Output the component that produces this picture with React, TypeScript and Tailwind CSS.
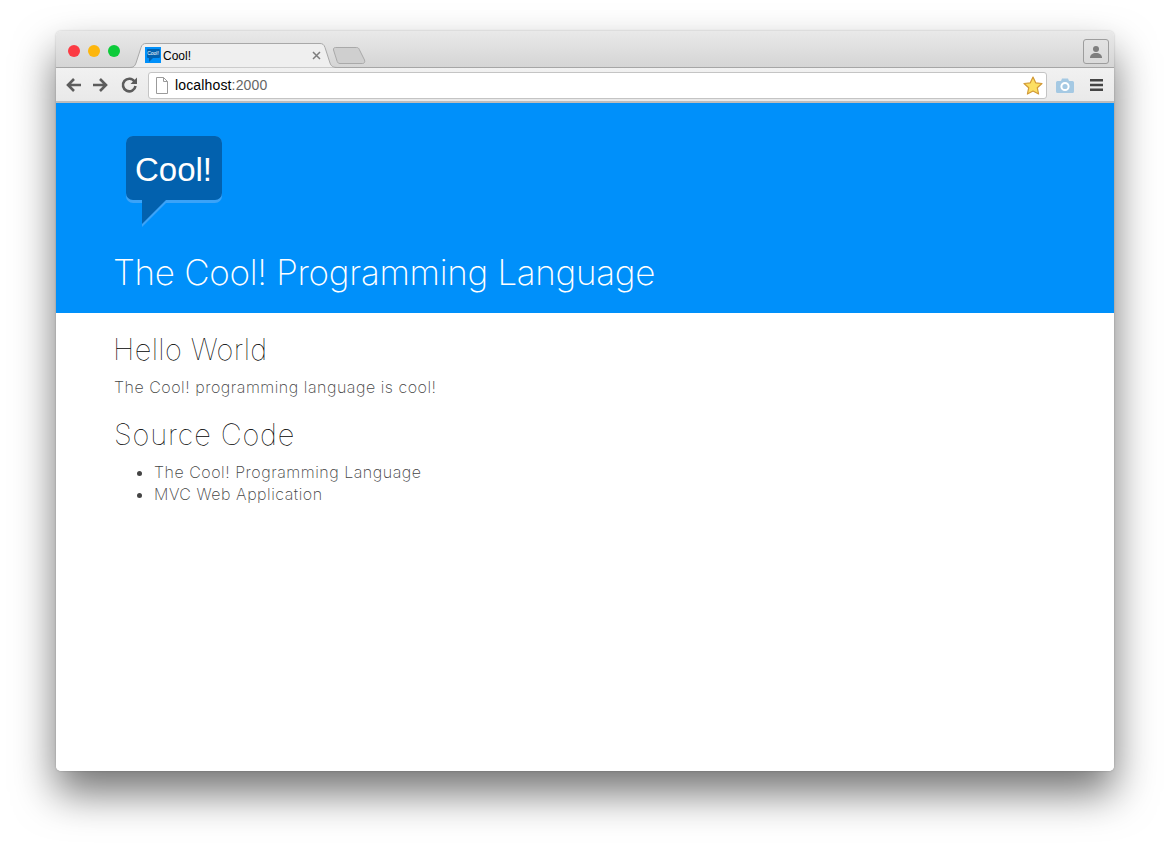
import React from "react";

const Logo = () => (
  <svg width="98" height="92" viewBox="0 0 98 92" className="block">
    <path d="M7 0H89a7 7 0 0 1 7 7V60a7 7 0 0 1-7 7H40L16 91V67H7a7 7 0 0 1-7-7V7a7 7 0 0 1 7-7Z" fill="#3ba3f8" />
    <path d="M7 0H89a7 7 0 0 1 7 7V57a7 7 0 0 1-7 7H40L16 88V64H7a7 7 0 0 1-7-7V7a7 7 0 0 1 7-7Z" fill="#0261ae" />
  </svg>
);

function TabShape() {
  return (
    <svg width="208" height="25" viewBox="0 0 208 25" className="block">
      <path d="M0 24.500c3.500 0 5-1.500 6-4.500L11 4.500C12 1.500 13.500.5 16 .5H190c2.500 0 4 1 5 4l5 15.500c1 3 3 4.500 7.500 4.500" fill="#efefef" stroke="#a8a8a8" strokeWidth="1" />
    </svg>
  );
}

export default function App() {
  return (
    <div className="h-[851px] w-[1170px] overflow-hidden bg-white px-[56px] pt-[31px] font-['Liberation_Sans',sans-serif]">
      <div className="flex h-[740px] w-[1058px] flex-col overflow-hidden rounded-[5px] bg-white shadow-[0_22px_42px_rgba(0,0,0,0.55),0_0_2px_rgba(0,0,0,0.25)]">
        {/* tab strip */}
        <div className="relative flex h-[37px] shrink-0 items-end border-b border-[#a6a6a6] bg-gradient-to-b from-[#e9e9e9] to-[#d5d5d5]">
          <div className="flex h-full items-center gap-2 pl-[12px] pt-1">
            <span className="h-3 w-3 rounded-full bg-[#fc3b44]" />
            <span className="h-3 w-3 rounded-full bg-[#fdb60d]" />
            <span className="h-3 w-3 rounded-full bg-[#0dcb3a]" />
          </div>
          <svg width="34" height="18" viewBox="0 0 34 18" className="absolute left-[276px] top-[16px]">
            <path d="M1.500 3c-.3-1.500.5-2.500 2-2.500h21c1.500 0 2.300.7 2.800 2L32.500 13c.8 2-.2 3.500-2 3.500H8c-1.500 0-2.300-.7-2.800-2Z" fill="#cfcfcf" stroke="#a9a9a9" strokeWidth="1" />
          </svg>
          <div className="absolute left-[74px] top-[12px]">
            <TabShape />
          </div>
          <div className="absolute left-[89px] top-[16px] flex w-[176px] items-center gap-[2px]">
            <div className="flex h-4 w-4 flex-col items-center bg-[#0090fa] pt-[2px]">
              <div className="flex h-[9px] w-[13px] items-center justify-center rounded-[1px] bg-[#0261ae] text-[5px] leading-none text-white">Cool!</div>
              <svg width="13" height="4" viewBox="0 0 13 4" className="block">
                <path d="M2 0h4L2 4Z" fill="#0261ae" />
              </svg>
            </div>
            <span className="pt-[1px] text-[12px] leading-none text-black">Cool!</span>
            <svg width="9" height="9" viewBox="0 0 9 9" className="ml-auto">
              <path d="M1 1l7 7M8 1L1 8" stroke="#7d7d7d" strokeWidth="1.500" />
            </svg>
          </div>
          <div className="absolute right-[5px] top-[8px] flex h-[25px] w-[26px] items-center justify-center rounded-[3px] border border-[#9d9d9d] bg-gradient-to-b from-[#e3e3e3] to-[#dadada]">
            <svg width="14" height="14" viewBox="0 0 14 14">
              <circle cx="7" cy="4" r="3" fill="#7f7f7f" />
              <path d="M1 13c0-3.500 2.500-5 6-5s6 1.500 6 5Z" fill="#7f7f7f" />
            </svg>
          </div>
        </div>
        {/* toolbar */}
        <div className="flex h-[35px] shrink-0 items-center border-b-2 border-[#6f6f6f]/40 bg-gradient-to-b from-[#f1f1f1] to-[#e9e9e9] pl-[9px] pr-[11px] pt-[1px]">
          <svg width="76" height="18" viewBox="0 0 76 18" className="shrink-0">
            <g fill="none" stroke="#5c5c5c" strokeWidth="2.600">
              <path d="M16 9H3M9 3 3 9l6 6" />
              <path d="M28 9h13M35 3l6 6-6 6" />
              <path d="M69.500 5.500A6.300 6.300 0 1 0 70.500 10" />
            </g>
            <path d="M72 1.500V8h-6.500Z" fill="#5c5c5c" />
          </svg>
          <div className="ml-[7px] flex h-[27px] min-w-0 flex-1 items-center rounded-[3px] border border-[#c4c4c4] bg-white pl-[7px] pr-[3px]">
            <svg width="12" height="17" viewBox="0 0 12 17" className="shrink-0">
              <path d="M.5.500h7l4 4v12H.5Z" fill="#fff" stroke="#9b9b9b" />
              <path d="M7.500.500v4h4" fill="none" stroke="#9b9b9b" />
            </svg>
            <span className="ml-[7px] text-[14px] leading-none tracking-[0.15px] text-black">
              localhost<span className="text-[#666]">:2000</span>
            </span>
            <svg width="20" height="19" viewBox="0 0 20 19" className="ml-auto shrink-0">
              <path d="M10 1l2.700 5.800 6.300.7-4.700 4.300 1.300 6.200L10 15l-5.600 3 1.300-6.200L1 7.500l6.300-.7Z" fill="#fcdf63" stroke="#d29a37" strokeWidth="1.200" strokeLinejoin="round" />
            </svg>
          </div>
          <svg width="18" height="15" viewBox="0 0 18 15" className="ml-[9px] shrink-0">
            <path d="M1.500 3H5l1-2.500h6L13 3h3.500A1.500 1.500 0 0 1 18 4.500v9a1.500 1.500 0 0 1-1.500 1.500h-15A1.500 1.500 0 0 1 0 13.500v-9A1.500 1.500 0 0 1 1.500 3Z" fill="#a5c9e3" />
            <circle cx="9" cy="8.500" r="3.600" fill="none" stroke="#fff" strokeWidth="2" />
          </svg>
          <svg width="13" height="12" viewBox="0 0 13 12" className="ml-[16px] shrink-0">
            <path d="M0 0h13v2.500H0ZM0 4.700h13v2.500H0ZM0 9.400h13v2.600H0Z" fill="#454545" />
          </svg>
        </div>
        {/* header */}
        <header className="flex h-[210px] shrink-0 flex-col bg-[#0090fa] pl-[58px] text-white">
          <div className="relative ml-[12px] mt-[33px] h-[92px] w-[98px]">
            <Logo />
            <span className="absolute left-[9px] top-[14px] text-[33px] leading-[40px] text-white">Cool!</span>
          </div>
          <h1 className="-ml-[1px] mt-[22px] font-['Inter',sans-serif] text-[35px] font-extralight leading-[45px] tracking-[-0.3px] text-white">
            The Cool! Programming Language
          </h1>
        </header>
        {/* content */}
        <main className="flex-1 bg-white pl-[58px] pt-[21px] font-['Inter',sans-serif] text-[#444]">
          <h2 className="-ml-[1px] text-[29px] font-thin leading-[32px] tracking-[0.4px] text-black">Hello World</h2>
          <p className="mt-[10px] text-[16px] font-extralight leading-[22px] tracking-[0.52px]">The Cool! programming language is cool!</p>
          <h2 className="mt-[21px] text-[29px] font-thin leading-[32px] tracking-[0.85px] text-black">Source Code</h2>
          <ul className="mt-[10px] list-disc pl-[40px] text-[16px] font-extralight leading-[22px] tracking-[0.52px]">
            <li>The Cool! Programming Language</li>
            <li>MVC Web Application</li>
          </ul>
        </main>
      </div>
    </div>
  );
}
